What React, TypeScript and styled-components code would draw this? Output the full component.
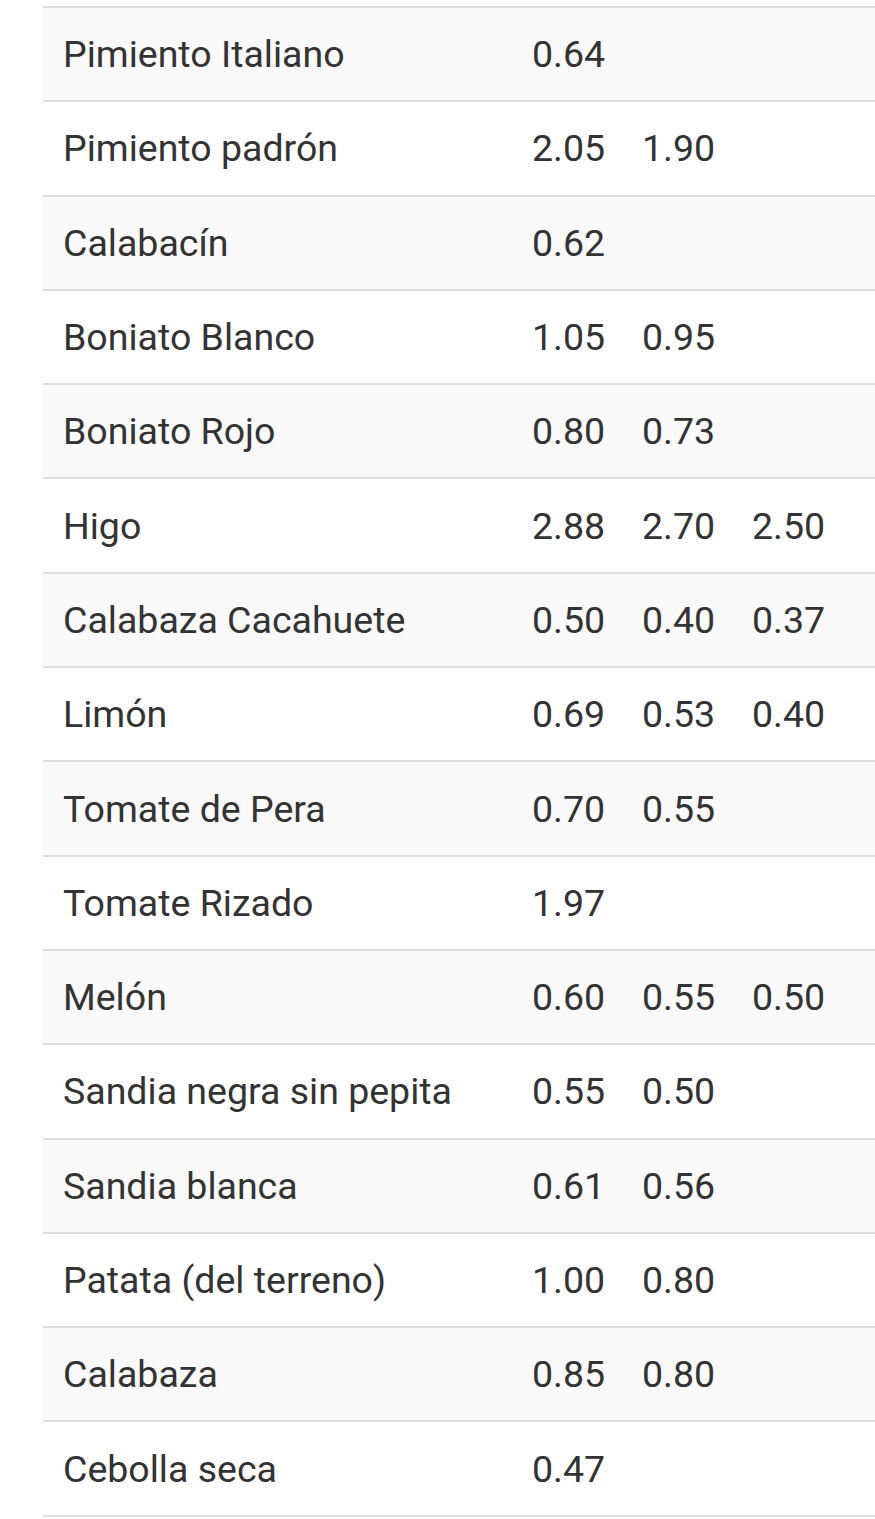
import React from "react";
import styled, { createGlobalStyle } from "styled-components";

const GlobalStyle = createGlobalStyle`
    html, body {
        margin: 0;
        padding: 0;
        background: #ffffff;
        overflow-x: hidden;
    }
    body {
        font-family: Roboto, "Liberation Sans", sans-serif;
    }
`;

const Table = styled.div`
    margin: 6px 0 0 43px;
    border-top: 2px solid #dedede;
`;

const Row = styled.div<{ $striped: boolean }>`
    display: grid;
    grid-template-columns: 469px 110px 110px 110px 1fr;
    align-items: center;
    box-sizing: border-box;
    height: 94.3px;
    border-bottom: 2px solid #dedede;
    background: ${(p) => (p.$striped ? "#f9f9f9" : "#ffffff")};
`;

const Cell = styled.div`
    padding-left: 20px;
    font-size: 37.5px;
    color: #333333;
    white-space: nowrap;
`;

const rows: [string, ...string[]][] = [
    ["Pimiento Italiano", "0.64"],
    ["Pimiento padrón", "2.05", "1.90"],
    ["Calabacín", "0.62"],
    ["Boniato Blanco", "1.05", "0.95"],
    ["Boniato Rojo", "0.80", "0.73"],
    ["Higo", "2.88", "2.70", "2.50"],
    ["Calabaza Cacahuete", "0.50", "0.40", "0.37"],
    ["Limón", "0.69", "0.53", "0.40"],
    ["Tomate de Pera", "0.70", "0.55"],
    ["Tomate Rizado", "1.97"],
    ["Melón", "0.60", "0.55", "0.50"],
    ["Sandia negra sin pepita", "0.55", "0.50"],
    ["Sandia blanca", "0.61", "0.56"],
    ["Patata (del terreno)", "1.00", "0.80"],
    ["Calabaza", "0.85", "0.80"],
    ["Cebolla seca", "0.47"],
];

const App: React.FC = (): JSX.Element => {
    return (
        <>
            <GlobalStyle />
            <Table>
                {rows.map((r, i) => (
                    <Row key={r[0]} $striped={i % 2 === 0}>
                        <Cell>{r[0]}</Cell>
                        <Cell>{r[1] ?? ""}</Cell>
                        <Cell>{r[2] ?? ""}</Cell>
                        <Cell>{r[3] ?? ""}</Cell>
                        <Cell />
                    </Row>
                ))}
            </Table>
        </>
    );
};

export default App;
